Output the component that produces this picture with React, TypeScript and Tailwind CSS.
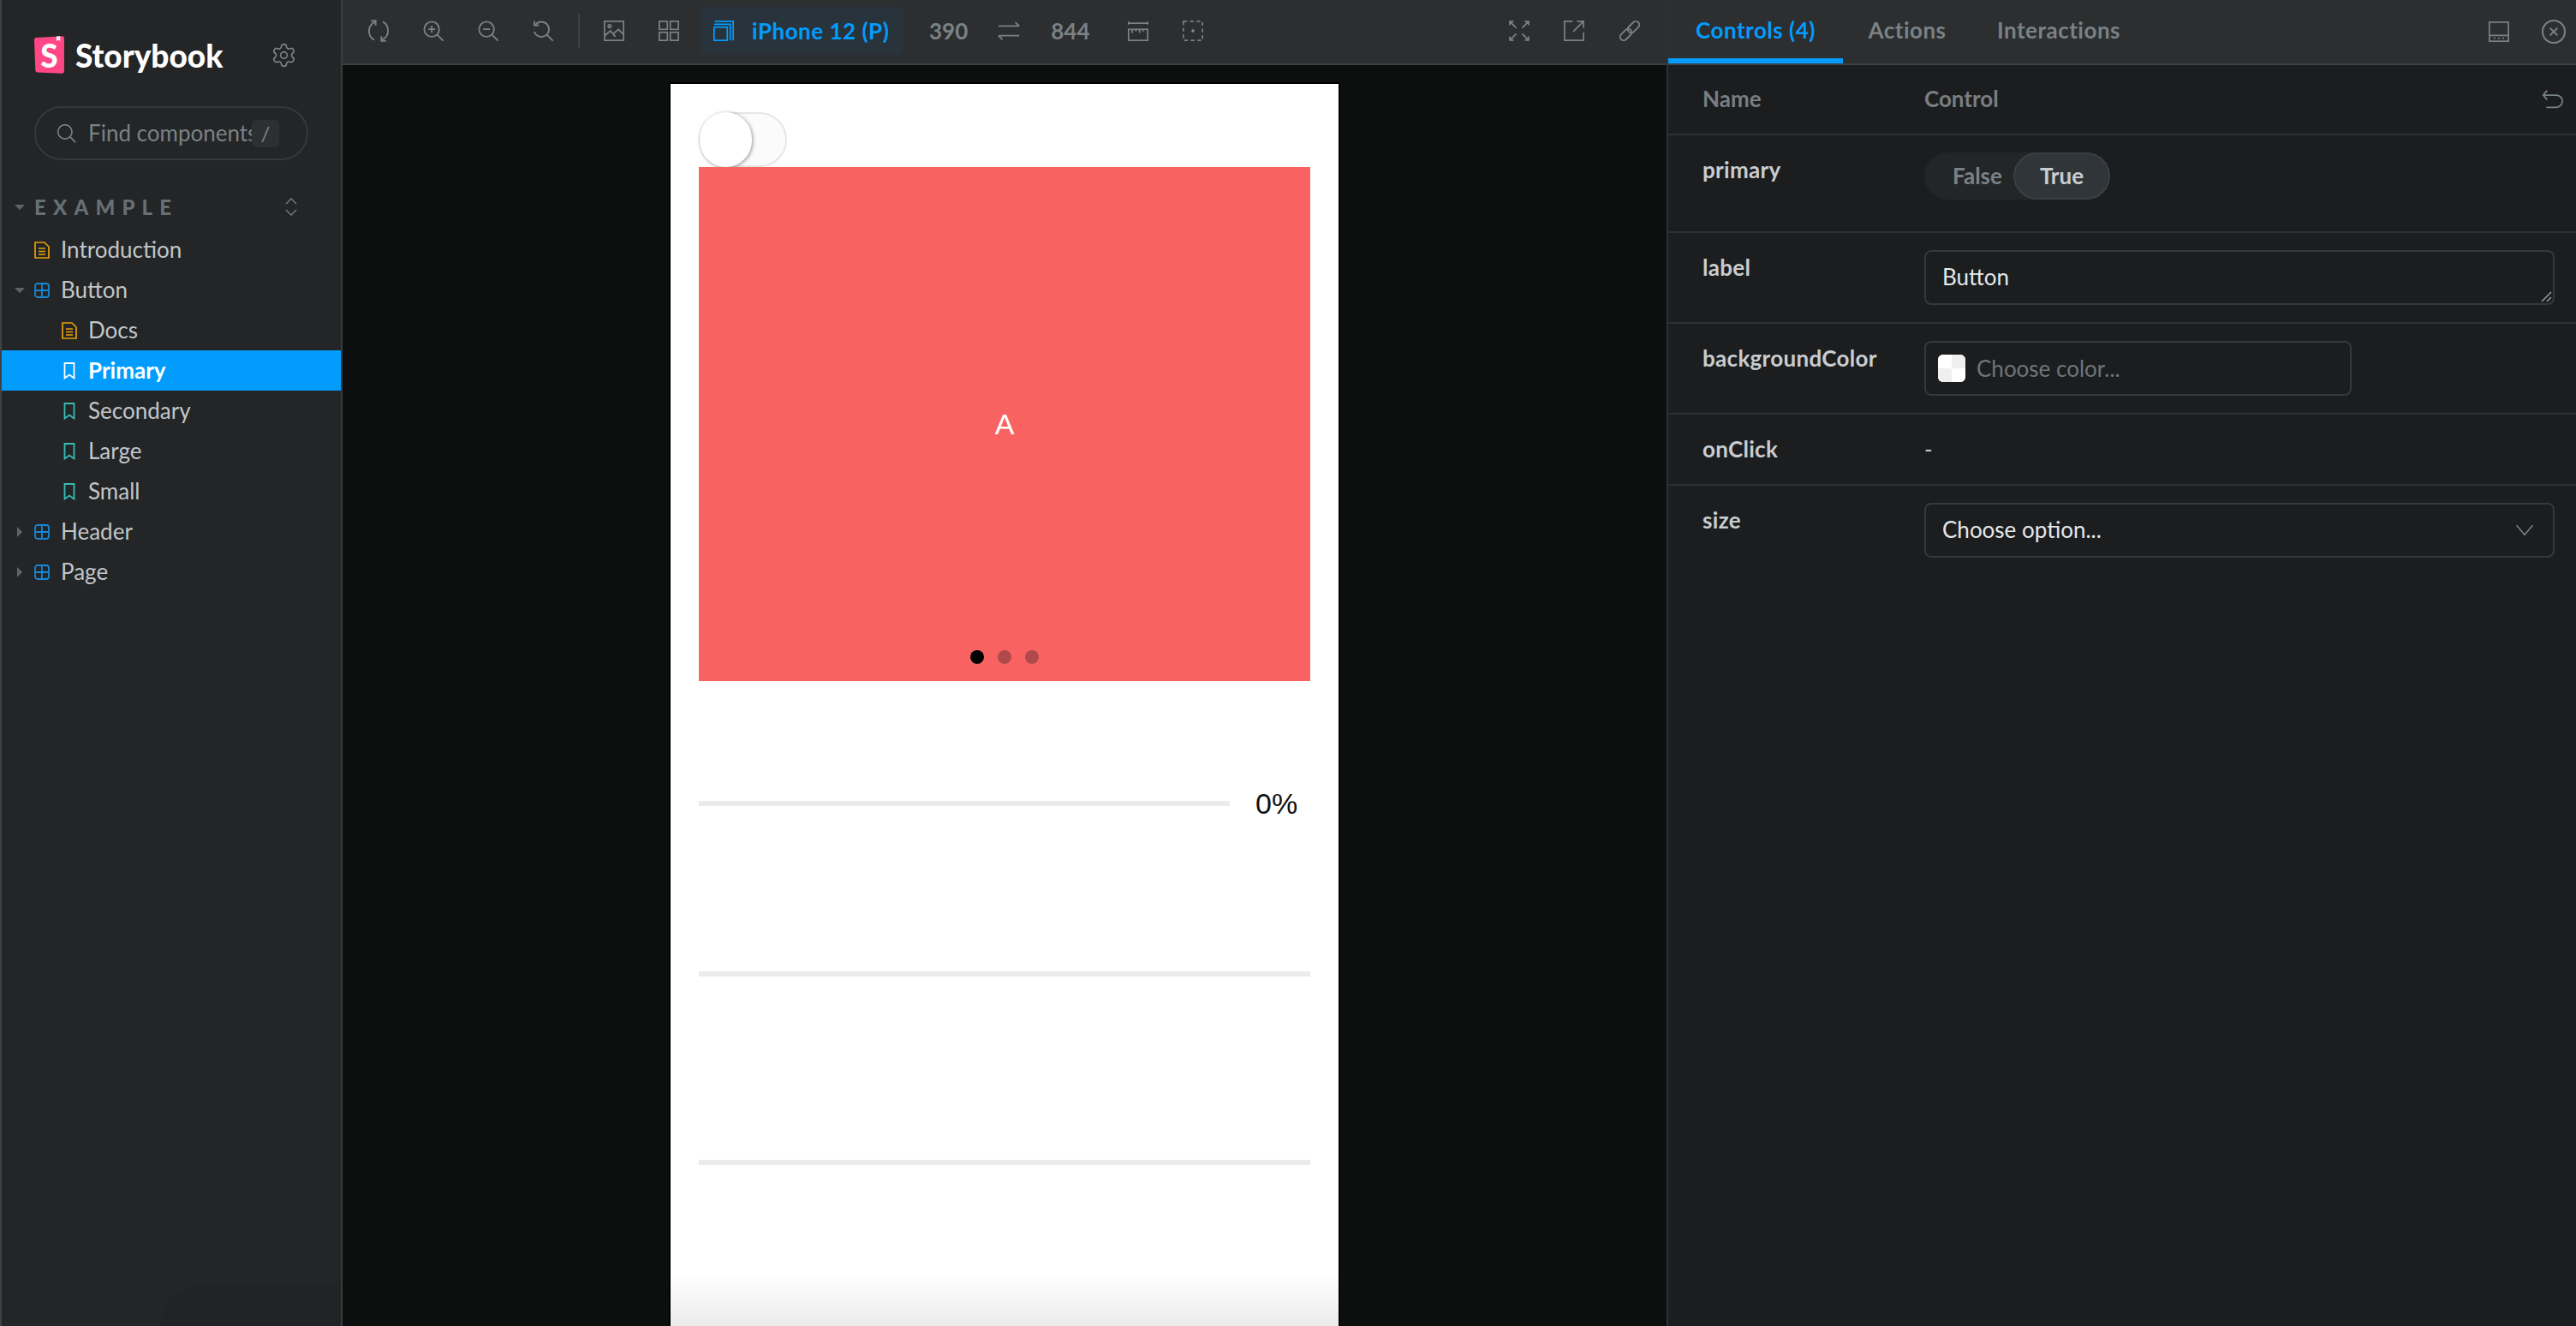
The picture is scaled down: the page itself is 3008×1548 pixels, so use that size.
import type { ReactNode } from 'react';
import { Settings } from 'lucide-react';

const ui = 'font-["Lato","Noto_Sans",sans-serif]';

function Icon({ children, size = 24, className = 'text-[#7a8286]', box = 14 }: { children: ReactNode; size?: number; className?: string; box?: number }) {
  return (
    <svg
      width={size}
      height={size}
      viewBox={`0 0 ${box} ${box}`}
      fill="none"
      stroke="currentColor"
      strokeWidth="1"
      className={`shrink-0 ${className}`}
    >
      {children}
    </svg>
  );
}

function DocIcon() {
  return (
    <svg width="18" height="20" viewBox="0 0 18 20" fill="none" stroke="#e5a00d" strokeWidth="1.7" className="shrink-0">
      <path d="M1 1h11l5 5v13H1z" />
      <path d="M5 8h8M5 11.500h8M5 15h8" />
    </svg>
  );
}

function ComponentIcon() {
  return (
    <svg width="18" height="18" viewBox="0 0 18 18" fill="none" stroke="#1587d8" strokeWidth="1.8" className="shrink-0">
      <rect x="1" y="1" width="16" height="16" rx="3" />
      <path d="M9 1v16M1 9h16" />
    </svg>
  );
}

function StoryIcon({ active }: { active?: boolean }) {
  return (
    <svg width="14" height="20" viewBox="0 0 14 20" fill="none" stroke={active ? '#ffffff' : '#37bdb7'} strokeWidth="1.8" className="shrink-0">
      <path d="M1.500 1h11v17.500L7 14.500l-5.500 4z" />
    </svg>
  );
}

function Caret({ open }: { open?: boolean }) {
  return open ? (
    <span className="block h-0 w-0 border-x-[6px] border-t-[6px] border-x-transparent border-t-[#5d6468]" />
  ) : (
    <span className="ml-[3px] block h-0 w-0 border-y-[6px] border-l-[6px] border-y-transparent border-l-[#5d6468]" />
  );
}

function TreeRow({
  label,
  icon,
  nested,
  caret,
  selected,
}: {
  label: string;
  icon: ReactNode;
  nested?: boolean;
  caret?: 'open' | 'closed';
  selected?: boolean;
}) {
  return (
    <div
      className={`flex h-[47px] items-center text-[26px] ${nested ? 'pl-[70px]' : 'pl-[15px]'} ${
        selected ? 'bg-[#029cfd] font-bold text-white' : 'text-[#c2c6c9]'
      }`}
    >
      {!nested && <span className="flex w-[23px] items-center">{caret && <Caret open={caret === 'open'} />}</span>}
      <span className="flex w-[17px] items-center justify-center">{icon}</span>
      <span className="ml-[14px]">{label}</span>
    </div>
  );
}

function Logo() {
  return (
    <div className="relative h-[44px] w-[35px] shrink-0">
      <svg width="35" height="44" viewBox="0 0 256 319">
        <path
          d="M9.870 293.320L.01 30.570C-.31 21.890 6.340 14.540 15.010 14L238.490.03c8.820-.55 16.420 6.150 16.980 14.970.02.330.03.660.03 1v286.320c0 8.840-7.160 16-16 16-.24 0-.48 0-.72-.01L25.150 308.710c-8.320-.37-14.970-7.060-15.280-15.390z"
          fill="#ff4785"
        />
        <path d="M188.670 39.130L190.190 2.410 220.880 0l1.330 37.870c.04 1.320-.99 2.420-2.310 2.470-.56.020-1.120-.16-1.560-.5l-11.830-9.320-14.020 10.630c-1.050.8-2.540.59-3.340-.46-.34-.44-.51-1-.48-1.560z" fill="#fff" />
      </svg>
      <span className='absolute inset-0 flex items-center justify-center pt-[1px] font-["Lato",sans-serif] text-[37px] leading-none font-black text-white'>S</span>
    </div>
  );
}

function Sidebar() {
  return (
    <aside className="relative flex h-full w-[400px] shrink-0 flex-col overflow-hidden border-r-2 border-l-2 border-r-[#3a3c3e] border-l-[#3f4143] bg-[#232527] pt-[41px]">
      <div className="flex h-[46px] items-center pl-[38px]">
        <Logo />
        <span className="ml-[13px] text-[37px] leading-none font-black text-white">Storybook</span>
        <Settings size={31} strokeWidth={1.3} className="ml-[56px] shrink-0 text-[#7a8286]" />
      </div>

      <div className="mt-[37px] ml-[38px] flex h-[63px] w-[320px] items-center rounded-full border-2 border-[#36383a] pl-[24px]">
        <Icon size={23} className="text-[#7a8286]">
          <circle cx="6" cy="6" r="5" />
          <path d="M9.700 9.700L13.500 13.500" />
        </Icon>
        <span className="ml-[14px] w-[191px] shrink-0 overflow-hidden text-[26px] whitespace-nowrap text-[#7a8286]">Find components</span>
        <span className="flex h-[32px] w-[32px] shrink-0 items-center justify-center rounded-[6px] bg-[#2c3033] text-[24px] text-[#7a8286]">/</span>
      </div>

      <div className="mt-[31px] flex h-[50px] items-center pb-[3px] pl-[15px] text-[#667075]">
        <span className="flex w-[23px] items-center">
          <Caret open />
        </span>
        <span className="text-[24px] font-black tracking-[0.34em]">EXAMPLE</span>
        <svg width="14" height="21" viewBox="0 0 14 21" fill="none" stroke="#7a8286" strokeWidth="1.300" className="mr-[51px] ml-auto">
          <path d="M1 7l6-6 6 6M1 14l6 6 6-6" />
        </svg>
      </div>

      <TreeRow label="Introduction" icon={<DocIcon />} />
      <TreeRow label="Button" icon={<ComponentIcon />} caret="open" />
      <TreeRow label="Docs" icon={<DocIcon />} nested />
      <TreeRow label="Primary" icon={<StoryIcon active />} nested selected />
      <TreeRow label="Secondary" icon={<StoryIcon />} nested />
      <TreeRow label="Large" icon={<StoryIcon />} nested />
      <TreeRow label="Small" icon={<StoryIcon />} nested />
      <TreeRow label="Header" icon={<ComponentIcon />} caret="closed" />
      <TreeRow label="Page" icon={<ComponentIcon />} caret="closed" />

      <div className="absolute right-0 bottom-0 h-[48px] w-[210px] rounded-tl-[70px] bg-[#202425]" />
    </aside>
  );
}

function Toolbar() {
  return (
    <div className="flex h-[76px] shrink-0 items-center border-b-2 border-[#3f4143] bg-[#2c2e30] pr-[30px] pb-[2px] pl-[29px] text-[26px] font-bold text-[#7a8286]">
      <div className="flex items-center gap-[38px]">
        <Icon size={26}>
          <path d="M4.800 1.400A6.300 6.300 0 0 0 4.300 12.700" />
          <path d="M9.200 12.600A6.300 6.300 0 0 0 9.700 1.300" />
          <path d="M2.300 .7h2.900v2.900" />
          <path d="M11.700 13.300H8.800v-2.900" />
        </Icon>
        <Icon size={26}>
          <circle cx="6" cy="6" r="4.700" />
          <path d="M9.500 9.500L13.300 13.300M6 3.800v4.400M3.800 6h4.400" />
        </Icon>
        <Icon size={26}>
          <circle cx="6" cy="6" r="4.700" />
          <path d="M9.500 9.500L13.300 13.300M3.800 6h4.400" />
        </Icon>
        <Icon size={26}>
          <path d="M2.300 3.200A4.700 4.700 0 1 1 1.600 7.500" />
          <path d="M9.500 9.500L13.300 13.300M1.600 .8v2.800h2.800" />
        </Icon>
      </div>
      <span className="mx-[28px] h-[40px] w-[2px] bg-[#3f4143]" />
      <Icon>
        <rect x=".5" y=".5" width="13" height="13" />
        <circle cx="4" cy="3.800" r="1" />
        <path d="M.5 10.500L4.500 7l3.500 4M6.500 9L10 6l3.500 3.500" />
      </Icon>
      <span className="ml-[40px] block">
        <Icon>
          <rect x=".5" y=".5" width="5.500" height="5.500" />
          <rect x="8" y=".5" width="5.500" height="5.500" />
          <rect x=".5" y="8" width="5.500" height="5.500" />
          <rect x="8" y="8" width="5.500" height="5.500" />
        </Icon>
      </span>
      <div className="ml-[24px] flex h-[56px] w-[239px] items-center rounded-[8px] bg-[#29333b] pl-[16px] text-[#029cfd]">
        <Icon className="text-[#029cfd]">
          <rect x=".5" y="4.500" width="9" height="9" />
          <path d="M.5 2.500h11v11M1 .5h12.500v13" />
        </Icon>
        <span className="ml-[21px] tracking-[0.5px] whitespace-nowrap">iPhone 12 (P)</span>
      </div>
      <span className="ml-[29px]">390</span>
      <span className="ml-[35px] block">
        <Icon size={26}>
          <path d="M.5 4h13M11 1.500L13.500 4M.5 10h13M3 12.500L.5 10" />
        </Icon>
      </span>
      <span className="ml-[36px]">844</span>
      <span className="ml-[44px] block">
        <Icon>
          <path d="M.5 .8v2M13.500 .8v2M.5 1.800h13" />
          <rect x=".5" y="6" width="13" height="7.500" />
          <path d="M3 6v2.500M5.500 6v1.500M8 6v2.500M10.500 6v1.500" />
        </Icon>
      </span>
      <span className="ml-[40px] block">
        <Icon>
          <rect x=".5" y=".5" width="13" height="13" strokeDasharray="2.500 2" />
          <circle cx="7" cy="7" r=".6" fill="currentColor" />
        </Icon>
      </span>
      <div className="ml-auto flex items-center gap-[40px]">
        <Icon>
          <path d="M5 5L.8 .8M.6 3.200V.6h2.600M9 5l4.200-4.200M10.800 .6h2.600v2.600M5 9L.8 13.200M.6 10.800v2.600h2.600M9 9l4.200 4.200M13.400 10.800v2.600h-2.600" />
        </Icon>
        <Icon>
          <path d="M6 .5H.5v13h13V8" />
          <path d="M6.500 7.500L13.300 .7M9 .5h4.500V5" />
        </Icon>
        <Icon size={26}>
          <g transform="rotate(-45 7 7)">
            <rect x="-.6" y="4.800" width="8.400" height="4.400" rx="2.200" />
            <rect x="6.200" y="4.800" width="8.400" height="4.400" rx="2.200" />
          </g>
        </Icon>
      </div>
    </div>
  );
}

function PhoneBar({ className = '' }: { className?: string }) {
  return <div className={`h-[6px] bg-[#ebebeb] ${className}`} />;
}

function Preview() {
  return (
    <div className="relative flex min-h-0 flex-1 justify-center overflow-hidden bg-[#0d0f0f] pt-[22px]">
      <div className='relative h-[1688px] w-[780px] shrink-0 bg-white px-[33px] pt-[33px] font-["Liberation_Sans",sans-serif] shadow-[0_0_0_2px_#000]'>
        <div className="relative h-[64px] w-[103px] rounded-full border-2 border-[#e6e6e6] bg-[#fbfbfb]">
          <div className="absolute top-[-2px] left-[-1px] h-[64px] w-[61px] rounded-full bg-white shadow-[1px_1px_4px_rgba(0,0,0,0.4)]" />
        </div>
        <div className="relative flex h-[600px] w-[714px] items-center justify-center bg-[#f86362] text-[34px] text-white">
          A
          <div className="absolute bottom-[20px] left-0 flex w-full justify-center gap-[16px]">
            <span className="h-[16px] w-[16px] rounded-full bg-black" />
            <span className="h-[16px] w-[16px] rounded-full bg-[#b04a4a]" />
            <span className="h-[16px] w-[16px] rounded-full bg-[#b04a4a]" />
          </div>
        </div>
        <div className="mt-[127px] flex h-[32px] items-center">
          <PhoneBar className="w-[620px]" />
          <span className="ml-[30px] text-[34px] leading-none text-[#111]">0%</span>
        </div>
        <PhoneBar className="mt-[180px]" />
        <PhoneBar className="mt-[214px]" />
      </div>
      <div className="absolute bottom-0 left-[383px] h-[62px] w-[780px] bg-gradient-to-b from-[#ebebeb00] to-[#ebebeb]" />
    </div>
  );
}

function Tab({ label, width, active }: { label: string; width: string; active?: boolean }) {
  return (
    <div
      className={`flex h-full items-center justify-center border-b-[6px] pt-[2px] tracking-[0.5px] ${width} ${
        active ? 'border-[#029cfd] text-[#029cfd]' : 'border-transparent text-[#7a8286]'
      }`}
    >
      {label}
    </div>
  );
}

function ArgRow({ name, children, height, last }: { name: string; children: ReactNode; height: string; last?: boolean }) {
  return (
    <div className={`flex ${height} ${last ? '' : 'border-b-2 border-[#2e3032]'}`}>
      <div className="w-[299px] shrink-0 pt-[20px] pl-[40px] text-[26px] leading-[40px] font-bold tracking-[0.3px] text-[#c9cdcf]">{name}</div>
      <div className="flex-1 pt-[20px] pr-[25px]">{children}</div>
    </div>
  );
}

function Panel() {
  return (
    <section className="flex h-full flex-1 flex-col bg-[#1b1d1f] text-[26px]">
      <div className="flex h-[76px] shrink-0 items-center border-b-2 border-[#3f4143] bg-[#2c2e30] pr-[12px] font-bold">
        <Tab label="Controls (4)" width="w-[204px]" active />
        <Tab label="Actions" width="w-[150px]" />
        <Tab label="Interactions" width="w-[204px]" />
        <div className="ml-auto flex items-center gap-[38px]">
          <Icon>
            <rect x=".5" y=".5" width="13" height="13" />
            <path d="M.5 9.500h13M3.500 11.500h1M6.500 11.500h1M9.500 11.500h1" />
          </Icon>
          <Icon size={28}>
            <circle cx="7" cy="7" r="6.500" />
            <path d="M4.800 4.800l4.400 4.400M9.200 4.800L4.800 9.200" />
          </Icon>
        </div>
      </div>

      <div className="flex h-[82px] items-center border-b-2 border-[#2e3032] pr-[15px] pb-[2px] font-bold text-[#7a7e81]">
        <span className="w-[299px] shrink-0 pl-[40px]">Name</span>
        <span>Control</span>
        <span className="ml-auto block">
          <Icon size={25}>
            <path d="M1 4.500h8.500a4 4 0 0 1 0 8H3M3.500 1.500L1 4.500l2.500 3" />
          </Icon>
        </span>
      </div>

      <ArgRow name="primary" height="h-[114px]">
        <div className="relative flex h-[55px] w-[217px] items-center rounded-full bg-[#232527] pl-[33px] font-bold text-[#7a8286]">
          False
          <span className="absolute top-0 right-0 flex h-[55px] w-[113px] items-center justify-center rounded-full border-2 border-[#3a3f44] bg-[#30353a] text-[#c9cdcf]">True</span>
        </div>
      </ArgRow>

      <ArgRow name="label" height="h-[106px]">
        <div className="relative flex h-[64px] items-center rounded-[8px] border-2 border-[#36383a] pb-[2px] pl-[19px] text-[#e6e8e9]">
          Button
          <svg width="14" height="14" viewBox="0 0 14 14" stroke="#9a9ea1" strokeWidth="1.500" className="absolute right-[1px] bottom-[1px]">
            <path d="M13 2L2 13M13 8L8 13" />
          </svg>
        </div>
      </ArgRow>

      <ArgRow name="backgroundColor" height="h-[106px]">
        <div className="flex h-[64px] w-[499px] items-center rounded-[8px] border-2 border-[#36383a] pl-[14px] text-[#6f7578]">
          <span className="grid h-[32px] w-[32px] grid-cols-2 grid-rows-2 overflow-hidden rounded-[6px] bg-white">
            <span className="bg-white" />
            <span className="bg-[#efefef]" />
            <span className="bg-[#efefef]" />
            <span className="bg-white" />
          </span>
          <span className="ml-[13px]">Choose color...</span>
        </div>
      </ArgRow>

      <ArgRow name="onClick" height="h-[83px]">
        <span className="block leading-[40px] text-[#c9cdcf]">-</span>
      </ArgRow>

      <ArgRow name="size" height="h-[102px]" last>
        <div className="flex h-[64px] items-center justify-between rounded-[8px] border-2 border-[#36383a] pr-[22px] pb-[2px] pl-[19px] text-[#e6e8e9]">
          Choose option...
          <Icon size={22} className="text-[#7a8286]">
            <path d="M1 4l6 7 6-7" />
          </Icon>
        </div>
      </ArgRow>
    </section>
  );
}

export default function App() {
  return (
    <div className={`flex h-[1548px] w-[3008px] overflow-hidden bg-[#0d0f0f] ${ui}`}>
      <Sidebar />
      <main className="flex h-full w-[1548px] shrink-0 flex-col border-r-2 border-[#2e3032]">
        <Toolbar />
        <Preview />
      </main>
      <Panel />
    </div>
  );
}
